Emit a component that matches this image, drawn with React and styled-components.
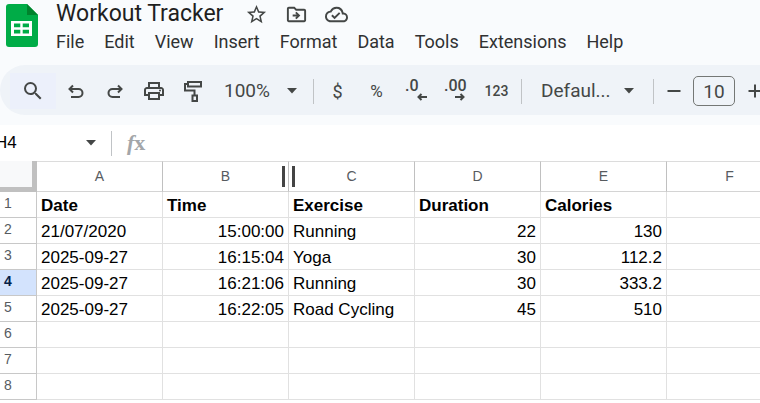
import React from "react";
import styled, { createGlobalStyle } from "styled-components";
import {
  MdStarBorder,
  MdOutlineDriveFileMove,
  MdOutlineCloudDone,
  MdSearch,
  MdOutlinePrint,
} from "react-icons/md";

const Global = createGlobalStyle`
  *, *::before, *::after { box-sizing: border-box; }
  body { margin: 0; background: #fff; font-family: Roboto, sans-serif; }
  button, input, select { font: inherit; color: inherit; border: 0; padding: 0; margin: 0; background: none; }
`;

const Page = styled.div`
  height: 100vh;
  overflow: hidden;
  display: flex;
  flex-direction: column;
`;

const Top = styled.div`
  background: #f9fbfd;
  padding-bottom: 10px;
  flex: none;
`;

const Header = styled.header`
  display: flex;
  gap: 18px;
  height: 65px;
  padding: 4px 0 0 6px;
  svg { flex: none; }
`;

const Heading = styled.div`
  display: flex;
  flex-direction: column;
  margin-top: -5px;
`;

const TitleRow = styled.div`
  display: flex;
  align-items: center;
  height: 30px;
  color: #444746;
`;

const Title = styled.h1`
  margin: 0 21px 0 0;
  font-size: 23px;
  line-height: 28px;
  font-weight: 400;
  color: #1f1f1f;
  white-space: nowrap;
`;

const TitleButton = styled.button`
  display: flex;
  align-items: center;
  justify-content: center;
  width: 24px;
  height: 24px;
  margin-right: 16px;
`;

const Menu = styled.nav`
  display: flex;
  gap: 20px;
`;

const MenuButton = styled.button`
  font-size: 18px;
  line-height: 26px;
  height: 26px;
  color: #303132;
`;

const Bar = styled.div`
  display: flex;
  align-items: center;
  height: 50px;
  padding: 2px 0 0 10px;
  margin-right: -60px;
  border-radius: 25px;
  background: #eff3f8;
  color: #444746;
`;

const Tool = styled.button`
  flex: none;
  display: flex;
  align-items: center;
  justify-content: center;
  width: ${(p) => p.$width || 39}px;
  height: 36px;
  font-size: ${(p) => p.$size || 18}px;
  font-weight: ${(p) => p.$weight || 400};
  background: ${(p) => (p.$lit ? "#ecf0fb" : "none")};
`;

const Divider = styled.span`
  flex: none;
  width: 1px;
  height: 25px;
  margin: 0 ${(p) => p.$after || 0}px 0 ${(p) => p.$before || 0}px;
  background: #c0c3c6;
`;

const Picker = styled.label`
  flex: none;
  display: flex;
  align-items: center;
  width: ${(p) => p.$width}px;
  padding-left: ${(p) => p.$indent}px;
`;

const Select = styled.select`
  appearance: none;
  width: ${(p) => p.$width}px;
  font-size: 19px;
  line-height: 26px;
  outline: none;
`;

const SizeInput = styled.input`
  flex: none;
  width: 42px;
  height: 30px;
  border: 1px solid #747775;
  border-radius: 5px;
  text-align: center;
  font-size: 19px;
`;

const FormulaBar = styled.div`
  flex: none;
  display: flex;
  align-items: center;
  height: 36px;
  background: #fff;
`;

const NameBox = styled.input`
  width: 91px;
  margin-left: -5px;
  font: 17px "Liberation Sans", Arial, sans-serif;
  color: #000;
`;

const Fx = styled.label`
  display: flex;
  font: italic bold 22px/24px "Liberation Serif", serif;
  color: #a3a6a9;
  span { font-style: normal; }
`;

const FormulaInput = styled.input`
  flex: 1;
  min-width: 0;
  height: 24px;
`;

const Sheet = styled.main`
  flex: 1;
  min-height: 0;
  overflow: hidden;
`;

const Grid = styled.table`
  width: 793px;
  table-layout: fixed;
  border-collapse: separate;
  border-spacing: 0;
  font: 17px "Liberation Sans", Arial, sans-serif;
  color: #000;
`;

const RowCol = styled.col`
  width: 37px;
`;

const Corner = styled.td`
  padding: 0;
  height: 31px;
  background: #f8f9fa;
  border: solid #c0c0c0;
  border-width: 0 5px 5px 0;
`;

const ColHead = styled.th`
  position: relative;
  height: 31px;
  padding: 0 0 1px;
  border: solid #c0c0c0;
  border-width: 1px 1px 1px 0;
  border-top-color: #dcdcdc;
  border-bottom-color: #d4d4d4;
  font-size: 14px;
  font-weight: 400;
  color: #575b5f;
`;

const ResizeHandle = styled.span`
  position: absolute;
  z-index: 1;
  top: 4px;
  right: -7px;
  width: 13px;
  height: 21px;
  border: solid #444;
  border-width: 0 3px;
`;

const RowHead = styled.th`
  height: 26px;
  padding: 0 0 3px 4px;
  border: solid #c8c8c8;
  border-width: 0 1px 1px 0;
  text-align: left;
  font-size: 14px;
  line-height: 16px;
  font-weight: ${(p) => (p.$active ? 700 : 400)};
  color: ${(p) => (p.$active ? "#041e49" : "#575b5f")};
  background: ${(p) => (p.$active ? "#d3e3fd" : "#fff")};
`;

const Cell = styled.td`
  height: 26px;
  padding: 2px 4px 0 4px;
  border: solid #e1e1e1;
  border-width: 0 1px 1px 0;
  line-height: 20px;
  white-space: nowrap;
  text-align: ${(p) => (p.$right ? "right" : "left")};
  font-weight: ${(p) => (p.$bold ? 700 : 400)};
`;

const Logo = () => (
  <svg width="32" height="43" viewBox="0 0 32 43" aria-label="Sheets">
    <path d="M3 0H21L32 11V40a3 3 0 0 1-3 3H3a3 3 0 0 1-3-3V3a3 3 0 0 1 3-3z" fill="#00ac47" />
    <path d="M21 0L32 11H21z" fill="#00832d" />
    <path
      fillRule="evenodd"
      fill="#fff"
      d="M5 17H26V32H5zM8 19.5V23.300H14.300V19.500zM16.700 19.500V23.300H23V19.500zM8 25.700V29.500H14.300V25.700zM16.700 25.700V29.500H23V25.700z"
    />
  </svg>
);

const Stroke = ({ children, size = 20 }) => (
  <svg width={size} height={size} viewBox={`0 0 ${size} ${size}`} fill="none" stroke="currentColor" strokeWidth="2">
    {children}
  </svg>
);

const Undo = () => (
  <Stroke>
    <path d="M7 4.500L3.500 8L7 11.500M4 8H12.500a4 4 0 0 1 0 8H5" />
  </Stroke>
);

const Redo = () => (
  <Stroke>
    <path d="M13 4.500L16.500 8L13 11.500M16 8H7.500a4 4 0 0 0 0 8H15" />
  </Stroke>
);

const PaintRoller = () => (
  <Stroke size={22}>
    <path d="M6 2H19V6.500H6zM6 4H3V10.500H12.500V15M10.500 15.500H15V21H10.500z" />
  </Stroke>
);

const Caret = () => (
  <svg width="10" height="6" viewBox="0 0 10 6">
    <path d="M0 0H10L5 5.500z" fill="#444746" />
  </svg>
);

const DecimalTool = styled(Tool)`
  flex-direction: column;
  align-items: stretch;
  justify-content: flex-start;
  padding: 5px 0 0 9px;
  font-size: 16px;
  line-height: 16px;
  font-weight: 500;
  text-align: left;
  svg { margin: -1px 0 0 ${(p) => p.$arrow}px; }
`;

const SmallArrow = ({ right }) => (
  <svg width="10" height="8" viewBox="0 0 10 8" fill="none" stroke="currentColor" strokeWidth="2">
    <path d={right ? "M0 4H8.500M5.500 1L8.500 4L5.500 7" : "M10 4H1.500M4.500 1L1.500 4L4.500 7"} />
  </svg>
);

const menus = ["File", "Edit", "View", "Insert", "Format", "Data", "Tools", "Extensions", "Help"];
const columns = ["A", "B", "C", "D", "E", "F"];
const rows = [
  ["Date", "Time", "Exercise", "Duration", "Calories", ""],
  ["21/07/2020", "15:00:00", "Running", "22", "130", ""],
  ["2025-09-27", "16:15:04", "Yoga", "30", "112.2", ""],
  ["2025-09-27", "16:21:06", "Running", "30", "333.2", ""],
  ["2025-09-27", "16:22:05", "Road Cycling", "45", "510", ""],
  ...Array.from({ length: 3 }, () => ["", "", "", "", "", ""]),
];
const numeric = [1, 3, 4];
const activeRow = 3;

export default function App() {
  return (
    <Page>
      <Global />
      <Top>
        <Header>
          <Logo />
          <Heading>
            <TitleRow>
              <Title>Workout Tracker</Title>
              <TitleButton aria-label="Star"><MdStarBorder size={23} /></TitleButton>
              <TitleButton aria-label="Move"><MdOutlineDriveFileMove size={23} /></TitleButton>
              <TitleButton aria-label="Saved to cloud"><MdOutlineCloudDone size={23} /></TitleButton>
            </TitleRow>
            <Menu>
              {menus.map((m) => <MenuButton key={m}>{m}</MenuButton>)}
            </Menu>
          </Heading>
        </Header>
        <Bar role="toolbar">
          <Tool $width={46} $lit aria-label="Search"><MdSearch size={24} /></Tool>
          <Tool aria-label="Undo"><Undo /></Tool>
          <Tool aria-label="Redo"><Redo /></Tool>
          <Tool aria-label="Print"><MdOutlinePrint size={24} /></Tool>
          <Tool aria-label="Paint format"><PaintRoller /></Tool>
          <Picker $width={101} $indent={12}>
            <Select $width={63} aria-label="Zoom"><option>100%</option></Select>
            <Caret />
          </Picker>
          <Divider $after={4} />
          <Tool aria-label="Currency">$</Tool>
          <Tool aria-label="Percent" $size={17}>%</Tool>
          <DecimalTool $arrow={12} aria-label="Decrease decimals">.0<SmallArrow /></DecimalTool>
          <DecimalTool $width={42} $arrow={11} aria-label="Increase decimals">.00<SmallArrow right /></DecimalTool>
          <Tool $size={14} $weight={500}>123</Tool>
          <Divider $before={5} />
          <Picker $width={131} $indent={19}>
            <Select $width={83} aria-label="Font"><option>Defaul...</option></Select>
            <Caret />
          </Picker>
          <Divider />
          <Tool aria-label="Decrease font size">
            <Stroke><path d="M3.500 10H16.500" /></Stroke>
          </Tool>
          <SizeInput aria-label="Font size" defaultValue="10" />
          <Tool aria-label="Increase font size">
            <Stroke><path d="M3.500 10H16.500M10 3.500V16.500" /></Stroke>
          </Tool>
        </Bar>
      </Top>
      <FormulaBar>
        <NameBox aria-label="Name box" defaultValue="H4" />
        <Caret />
        <Divider $before={15} $after={15} />
        <Fx htmlFor="formula">f<span>x</span></Fx>
        <FormulaInput id="formula" />
      </FormulaBar>
      <Sheet>
        <Grid>
          <colgroup>
            <RowCol />
            {columns.map((c) => <col key={c} />)}
          </colgroup>
          <thead>
            <tr>
              <Corner />
              {columns.map((c) => (
                <ColHead key={c} scope="col">
                  {c}
                  {c === "B" && <ResizeHandle />}
                </ColHead>
              ))}
            </tr>
          </thead>
          <tbody>
            {rows.map((row, r) => (
              <tr key={r}>
                <RowHead scope="row" $active={r === activeRow}>{r + 1}</RowHead>
                {row.map((value, c) => (
                  <Cell key={c} $bold={r === 0} $right={r > 0 && numeric.includes(c)}>{value}</Cell>
                ))}
              </tr>
            ))}
          </tbody>
        </Grid>
      </Sheet>
    </Page>
  );
}
